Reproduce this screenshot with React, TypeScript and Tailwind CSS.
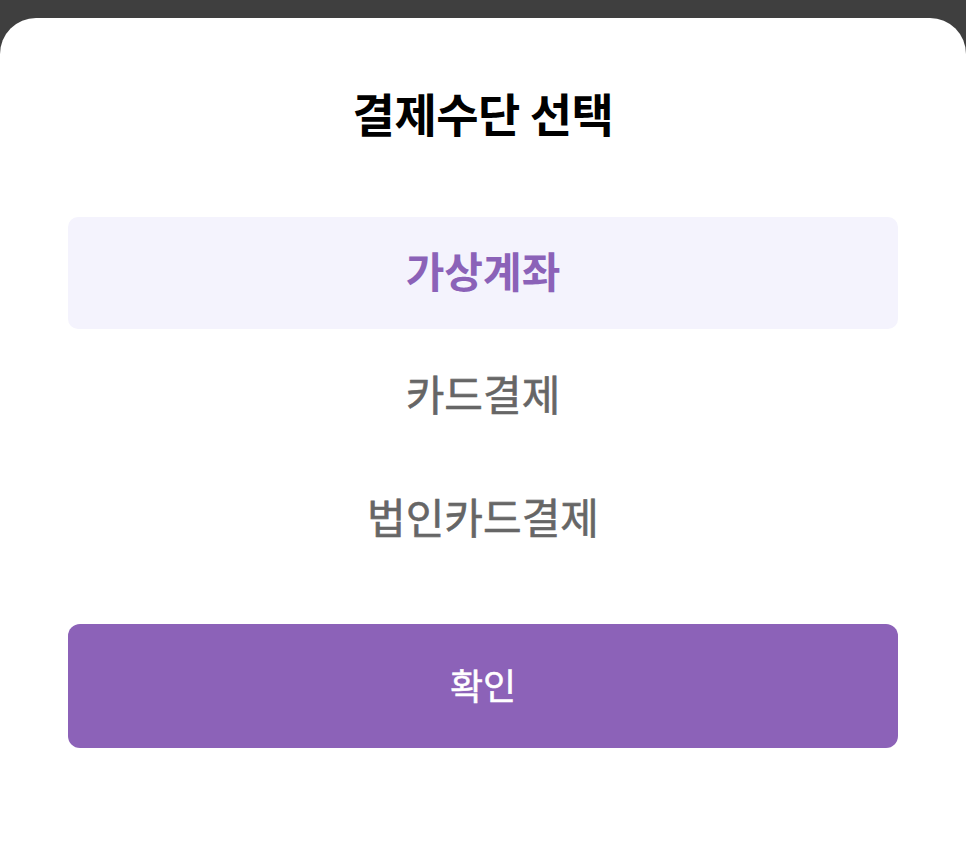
import { useState } from "react";

const methods = ["가상계좌", "카드결제", "법인카드결제"];

export default function App() {
  const [selected, setSelected] = useState(0);

  return (
    <div
      className="flex h-[846px] w-full flex-col bg-[#3f3f3f] pt-[18px]"
      style={{ fontFamily: '"Noto Sans CJK KR", "Noto Sans", sans-serif' }}
    >
      <div className="flex flex-1 flex-col rounded-t-[36px] bg-white px-[68px] pt-[70px]">
        <h2 className="text-center text-[46px] font-bold leading-[48px] tracking-[-0.5px] text-black">
          결제수단 선택
        </h2>
        <ul className="mt-[81px] flex flex-col gap-[11px]">
          {methods.map((m, i) => (
            <li key={m}>
              <button
                onClick={() => setSelected(i)}
                className={
                  i === selected
                    ? "flex h-[112px] w-full items-center justify-center rounded-[10px] bg-[#f4f3fd] pb-[8px] text-[42px] font-semibold text-[#8b62b8]"
                    : "flex h-[112px] w-full items-center justify-center rounded-[10px] pb-[8px] text-[42px] font-normal text-[#666666] [-webkit-text-stroke:0.6px_#666666]"
                }
              >
                {m}
              </button>
            </li>
          ))}
        </ul>
        <button className="mt-[49px] flex h-[124px] w-full items-center justify-center rounded-[12px] bg-[#8c62b8] pb-[4px] text-[36px] font-normal text-white [-webkit-text-stroke:0.5px_#ffffff]">
          확인
        </button>
      </div>
    </div>
  );
}
